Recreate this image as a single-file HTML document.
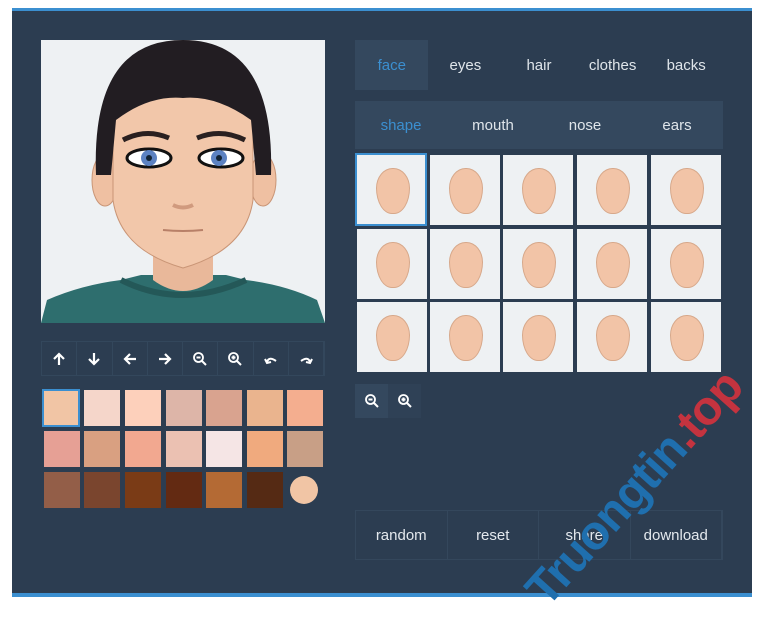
<!DOCTYPE html><html><head><style>
body{margin:0;width:768px;height:607px;background:#fff;position:relative;overflow:hidden;font-family:"Liberation Sans",sans-serif}
.p{position:absolute;left:12px;top:8px;width:740px;height:589px;background:#2c3d51;border-top:3px solid #3b8fd0;border-bottom:4px solid #3b8fd0;box-sizing:border-box}
.a{position:absolute}
.tb{position:absolute;left:41px;top:341px;width:284px;height:35px;display:flex;border:1px solid #33475c;box-sizing:border-box}
.tb div{flex:1;border-right:1px solid #33475c;display:flex;align-items:center;justify-content:center}
.sw{position:absolute;width:36px;height:36px}
.tabs{position:absolute;left:355px;top:40px;width:368px;height:50px;display:flex}
.tabs div{flex:1;color:#dfe5ea;font-size:15px;display:flex;align-items:center;justify-content:center}
.sub{position:absolute;left:355px;top:101px;width:368px;height:48px;background:#34485e;display:flex}
.sub div{flex:1;color:#dfe5ea;font-size:15px;display:flex;align-items:center;justify-content:center}
.c{position:absolute;width:70px;height:70px;background:#eef1f3}
.c::after{content:"";position:absolute;left:19px;top:13px;width:32px;height:44px;background:#f2c4a7;border:1px solid #d7a88a;border-radius:50% 50% 48% 48%/45% 45% 58% 58%}
.bb{position:absolute;left:355px;top:510px;width:368px;height:50px;display:flex;border:1px solid #34475c;box-sizing:border-box}
.bb div{flex:1;border-right:1px solid #34475c;color:#e4e9ee;font-size:15px;display:flex;align-items:center;justify-content:center}
svg.i{width:16px;height:16px}
</style></head><body>
<div class="p"></div>
<div class="a" style="left:41px;top:40px;width:284px;height:283px;background:#eef1f3;overflow:hidden">
<svg width="284" height="283" viewBox="0 0 284 283">
<path d="M0 283 L6 260 Q40 245 80 240 L100 235 L185 235 L205 240 Q245 245 276 260 L284 283Z" fill="#2e6e6e"/>
<path d="M80 240 Q140 270 205 240" stroke="#245858" stroke-width="6" fill="none"/>
<path d="M112 195 L112 240 Q142 262 172 240 L172 195Z" fill="#e9b89a"/>
<ellipse cx="64" cy="140" rx="13" ry="26" fill="#efc0a2" stroke="#c99576"/>
<ellipse cx="222" cy="140" rx="13" ry="26" fill="#efc0a2" stroke="#c99576"/>
<path d="M72 90 Q72 40 142 40 Q212 40 212 90 L212 160 Q205 210 142 228 Q79 210 72 160Z" fill="#f2c7aa" stroke="#c99576"/>
<path d="M55 135 Q50 0 142 0 Q234 0 230 135 L215 135 L210 80 Q175 55 142 58 Q108 55 75 80 L70 135Z" fill="#221d22"/>
<path d="M82 100 Q105 88 128 98" stroke="#2a2020" stroke-width="5" fill="none"/>
<path d="M156 98 Q180 88 204 100" stroke="#2a2020" stroke-width="5" fill="none"/>
<ellipse cx="108" cy="118" rx="22" ry="9" fill="#fff" stroke="#111" stroke-width="3"/>
<circle cx="108" cy="118" r="8" fill="#5c82c2"/><circle cx="108" cy="118" r="3" fill="#123"/>
<ellipse cx="180" cy="118" rx="22" ry="9" fill="#fff" stroke="#111" stroke-width="3"/>
<circle cx="178" cy="118" r="8" fill="#5c82c2"/><circle cx="178" cy="118" r="3" fill="#123"/>
<path d="M132 165 Q142 170 152 165" stroke="#d09a7e" stroke-width="4" fill="none"/>
<path d="M122 190 Q142 192 162 190" stroke="#b88068" stroke-width="2" fill="none"/>
</svg></div>
<div class="tb">
<div><svg class="i" viewBox="0 0 16 16"><path d="M8 14V3M3 8l5-5 5 5" stroke="#fff" stroke-width="2.2" fill="none"/></svg></div>
<div><svg class="i" viewBox="0 0 16 16"><path d="M8 2v11M3 8l5 5 5-5" stroke="#fff" stroke-width="2.2" fill="none"/></svg></div>
<div><svg class="i" viewBox="0 0 16 16"><path d="M14 8H3M8 3L3 8l5 5" stroke="#fff" stroke-width="2.2" fill="none"/></svg></div>
<div><svg class="i" viewBox="0 0 16 16"><path d="M2 8h11M8 3l5 5-5 5" stroke="#fff" stroke-width="2.2" fill="none"/></svg></div>
<div><svg class="i" viewBox="0 0 16 16"><circle cx="6.5" cy="6.5" r="4.5" stroke="#fff" stroke-width="1.8" fill="none"/><path d="M10 10l4 4M4.5 6.5h4" stroke="#fff" stroke-width="2"/></svg></div>
<div><svg class="i" viewBox="0 0 16 16"><circle cx="6.5" cy="6.5" r="4.5" stroke="#fff" stroke-width="1.8" fill="none"/><path d="M10 10l4 4M4.5 6.5h4M6.5 4.5v4" stroke="#fff" stroke-width="2"/></svg></div>
<div><svg class="i" viewBox="0 0 16 16"><path d="M4 11Q6 5 13 10M2 8l2 4 4-1" stroke="#fff" stroke-width="2" fill="none"/></svg></div>
<div><svg class="i" viewBox="0 0 16 16"><path d="M12 11Q10 5 3 10M14 8l-2 4-4-1" stroke="#fff" stroke-width="2" fill="none"/></svg></div>
</div>
<div class="sw" style="left:42px;top:389px;background:#f1c5a5;border:2px solid #3b8fd0;width:34px;height:34px"></div>
<div class="sw" style="left:84px;top:390px;background:#f5d6ca"></div>
<div class="sw" style="left:125px;top:390px;background:#fdd0bb"></div>
<div class="sw" style="left:166px;top:390px;background:#ddb5a8"></div>
<div class="sw" style="left:206px;top:390px;background:#d9a38f"></div>
<div class="sw" style="left:247px;top:390px;background:#eab48e"></div>
<div class="sw" style="left:287px;top:390px;background:#f4ae8f"></div>
<div class="sw" style="left:44px;top:431px;background:#e6a095"></div>
<div class="sw" style="left:84px;top:431px;background:#d9a081"></div>
<div class="sw" style="left:125px;top:431px;background:#f2a890"></div>
<div class="sw" style="left:166px;top:431px;background:#ebc1b2"></div>
<div class="sw" style="left:206px;top:431px;background:#f5e5e5"></div>
<div class="sw" style="left:247px;top:431px;background:#f0aa7e"></div>
<div class="sw" style="left:287px;top:431px;background:#c89f86"></div>
<div class="sw" style="left:44px;top:472px;background:#935e48"></div>
<div class="sw" style="left:84px;top:472px;background:#7a452e"></div>
<div class="sw" style="left:125px;top:472px;background:#7a3b16"></div>
<div class="sw" style="left:166px;top:472px;background:#632a12"></div>
<div class="sw" style="left:206px;top:472px;background:#b46a34"></div>
<div class="sw" style="left:247px;top:472px;background:#552a14"></div>
<div class="sw" style="left:290px;top:476px;width:28px;height:28px;border-radius:50%;background:#f1c5a5"></div>
<div class="a" style="left:355px;top:40px;width:73px;height:50px;background:#34485e"></div>
<div class="tabs"><div style="color:#3b8fd0">face</div><div>eyes</div><div>hair</div><div>clothes</div><div>backs</div></div>
<div class="sub"><div style="color:#3b8fd0">shape</div><div>mouth</div><div>nose</div><div>ears</div></div>
<div class="c" style="left:355px;top:153px;width:68px;height:69px;border:2px solid #3b8fd0"></div>
<div class="c" style="left:430px;top:155px"></div><div class="c" style="left:503px;top:155px"></div><div class="c" style="left:577px;top:155px"></div><div class="c" style="left:651px;top:155px"></div>
<div class="c" style="left:357px;top:229px"></div><div class="c" style="left:430px;top:229px"></div><div class="c" style="left:503px;top:229px"></div><div class="c" style="left:577px;top:229px"></div><div class="c" style="left:651px;top:229px"></div>
<div class="c" style="left:357px;top:302px"></div><div class="c" style="left:430px;top:302px"></div><div class="c" style="left:503px;top:302px"></div><div class="c" style="left:577px;top:302px"></div><div class="c" style="left:651px;top:302px"></div>
<div class="a" style="left:355px;top:384px;width:33px;height:34px;background:#34485e;display:flex;align-items:center;justify-content:center"><svg class="i" viewBox="0 0 16 16"><circle cx="6.5" cy="6.5" r="4.5" stroke="#fff" stroke-width="1.8" fill="none"/><path d="M10 10l4 4M4.5 6.5h4" stroke="#fff" stroke-width="2"/></svg></div>
<div class="a" style="left:388px;top:384px;width:33px;height:34px;background:#2f4156;display:flex;align-items:center;justify-content:center"><svg class="i" viewBox="0 0 16 16"><circle cx="6.5" cy="6.5" r="4.5" stroke="#fff" stroke-width="1.8" fill="none"/><path d="M10 10l4 4M4.5 6.5h4M6.5 4.5v4" stroke="#fff" stroke-width="2"/></svg></div>
<div class="bb"><div>random</div><div>reset</div><div>share</div><div>download</div></div>
<div class="a" style="left:515px;top:580px;transform:rotate(-48deg);transform-origin:left top;font-size:48px;font-weight:bold;color:#1f6fae;white-space:nowrap;letter-spacing:-1px">Truongtin<span style="color:#c4333f">.top</span></div>
</body></html>
